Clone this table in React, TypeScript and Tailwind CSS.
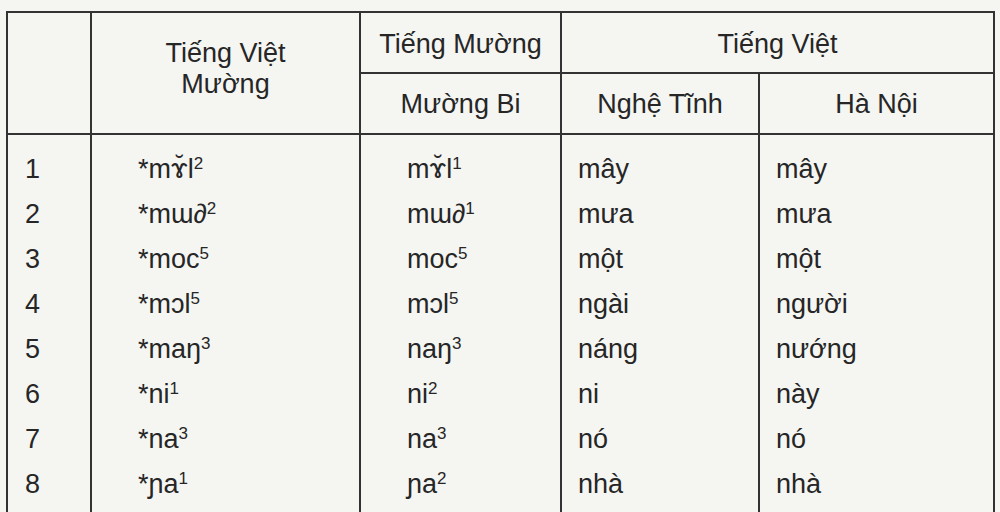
import React from "react"

type Row = {
  no: string
  proto: [string, string]
  muong: [string, string]
  ngheTinh: string
  haNoi: string
}

const rows: Row[] = [
  { no: "1", proto: ["*mɤ̆l", "2"], muong: ["mɤ̆l", "1"], ngheTinh: "mây", haNoi: "mây" },
  { no: "2", proto: ["*mɯ∂", "2"], muong: ["mɯ∂", "1"], ngheTinh: "mưa", haNoi: "mưa" },
  { no: "3", proto: ["*moc", "5"], muong: ["moc", "5"], ngheTinh: "một", haNoi: "một" },
  { no: "4", proto: ["*mɔl", "5"], muong: ["mɔl", "5"], ngheTinh: "ngài", haNoi: "người" },
  { no: "5", proto: ["*maŋ", "3"], muong: ["naŋ", "3"], ngheTinh: "náng", haNoi: "nướng" },
  { no: "6", proto: ["*ni", "1"], muong: ["ni", "2"], ngheTinh: "ni", haNoi: "này" },
  { no: "7", proto: ["*na", "3"], muong: ["na", "3"], ngheTinh: "nó", haNoi: "nó" },
  { no: "8", proto: ["*ɲa", "1"], muong: ["ɲa", "2"], ngheTinh: "nhà", haNoi: "nhà" },
]

function Word({ w }: { w: [string, string] }) {
  return (
    <>
      {w[0]}
      <sup className="text-[17px] top-[-0.55em]">{w[1]}</sup>
    </>
  )
}

export default function App() {
  const line = "border-[#333333]"
  return (
    <div
      className="h-[512px] w-[1000px] overflow-hidden bg-[#f5f5f2] pl-[6px] pt-[11px] text-[27px] text-[#262626]"
      style={{ fontFamily: '"Liberation Sans", Arial, "DejaVu Sans", sans-serif' }}
    >
      <table className={`w-[987px] table-fixed border-collapse border-2 border-b-0 ${line}`}>
        <colgroup>
          <col className="w-[84px]" />
          <col className="w-[269px]" />
          <col className="w-[201px]" />
          <col className="w-[198px]" />
          <col className="w-[235px]" />
        </colgroup>
        <thead>
          <tr className="h-[61px]">
            <th rowSpan={2} className={`border-2 ${line} font-normal`}></th>
            <th rowSpan={2} className={`border-2 ${line} pb-[8px] text-center align-middle font-normal leading-[31px]`}>
              Tiếng Việt
              <br />
              Mường
            </th>
            <th className={`border-2 ${line} pt-[3px] text-center font-normal`}>Tiếng Mường</th>
            <th colSpan={2} className={`border-2 ${line} pt-[3px] text-center font-normal`}>
              Tiếng Việt
            </th>
          </tr>
          <tr className="h-[61px]">
            <th className={`border-2 ${line} pt-[2px] text-center font-normal`}>Mường Bi</th>
            <th className={`border-2 ${line} pt-[2px] text-center font-normal`}>Nghệ Tĩnh</th>
            <th className={`border-2 ${line} pt-[2px] text-center font-normal`}>Hà Nội</th>
          </tr>
        </thead>
        <tbody>
          {rows.map((r, i) => {
            const pad = i === 0 ? "pt-[12px]" : ""
            return (
              <tr key={r.no} className="leading-[45px]">
                <td className={`border-x-2 ${line} ${pad} pl-[17px]`}>{r.no}</td>
                <td className={`border-x-2 ${line} ${pad} pl-[46px]`}>
                  <Word w={r.proto} />
                </td>
                <td className={`border-x-2 ${line} ${pad} pl-[46px]`}>
                  <Word w={r.muong} />
                </td>
                <td className={`border-x-2 ${line} ${pad} pl-[16px]`}>{r.ngheTinh}</td>
                <td className={`border-x-2 ${line} ${pad} pl-[16px]`}>{r.haNoi}</td>
              </tr>
            )
          })}
          <tr className="h-[40px]">
            <td className={`border-x-2 ${line}`}></td>
            <td className={`border-x-2 ${line}`}></td>
            <td className={`border-x-2 ${line}`}></td>
            <td className={`border-x-2 ${line}`}></td>
            <td className={`border-x-2 ${line}`}></td>
          </tr>
        </tbody>
      </table>
    </div>
  )
}
